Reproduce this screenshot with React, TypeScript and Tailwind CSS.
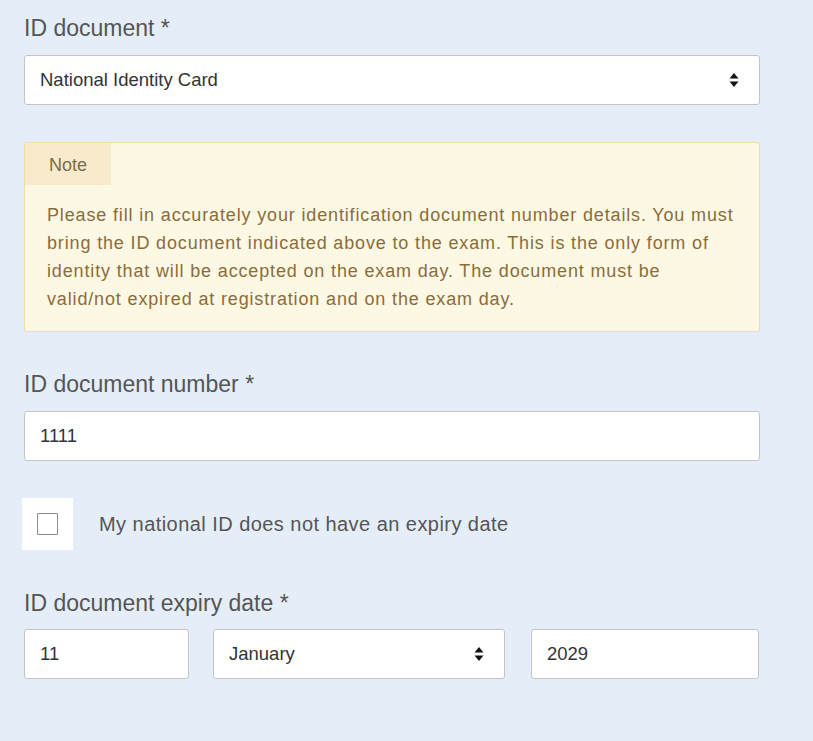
function SelectArrows() {
  return (
    <svg width="10" height="16" viewBox="0 0 10 16" className="shrink-0">
      <path d="M5 1 L9.5 6.5 H0.5 Z" fill="#111" />
      <path d="M5 15 L9.5 9.5 H0.5 Z" fill="#111" />
    </svg>
  );
}

function Label({ children, tight }: { children: React.ReactNode; tight?: boolean }) {
  return (
    <label className={"block text-[23px] leading-none text-[#555] " + (tight ? "mb-[14px]" : "mb-[15px]")}>
      {children}
    </label>
  );
}

function Field({ value, select, className }: { value: string; select?: boolean; className?: string }) {
  return (
    <div
      className={
        "h-[50px] bg-white border border-[#c4c4c4] rounded-[3px] flex items-center justify-between pl-[15px] pr-[20px] text-[18.5px] text-[#333] " +
        (className ?? "")
      }
    >
      <span>{value}</span>
      {select && <SelectArrows />}
    </div>
  );
}

export default function App() {
  return (
    <div className="min-h-[741px] w-[813px] bg-[#e5eef8] font-['Liberation_Sans',Arial,sans-serif]">
      <div className="w-[736px] ml-[24px] pt-[17px]">
        <Label>ID document *</Label>
        <Field value="National Identity Card" select />

        <div className="mt-[37px] bg-[#fdf8e3] border border-[#f0dfa4] rounded-[2px] pb-[18px]">
          <div className="inline-flex items-center h-[42px] pt-[3px] bg-[#f8ebcc] px-[24px] text-[18px] text-[#7a6a4e]">
            Note
          </div>
          <p className="px-[22px] pt-[16px] text-[18px] tracking-[0.85px] leading-[28px] text-[#8a6d3b]">
            Please fill in accurately your identification document number details. You must
            bring the ID document indicated above to the exam. This is the only form of
            identity that will be accepted on the exam day. The document must be
            valid/not expired at registration and on the exam day.
          </p>
        </div>

        <div className="mt-[41px]">
          <Label>ID document number *</Label>
          <Field value="1111" />
        </div>

        <div className="mt-[37px] flex items-center gap-[26px]">
          <div className="w-[51px] h-[52px] bg-white -ml-[2px] flex items-center justify-center">
            <div className="w-[21px] h-[22px] border border-[#8c8c8c] rounded-[1px] bg-white" />
          </div>
          <span className="text-[20px] tracking-[0.45px] text-[#555]">My national ID does not have an expiry date</span>
        </div>

        <div className="mt-[42px]">
          <Label tight>ID document expiry date *</Label>
          <div className="flex gap-[24px]">
            <Field value="11" className="w-[165px]" />
            <Field value="January" select className="w-[292px]" />
            <Field value="2029" className="w-[228px] ml-[2px]" />
          </div>
        </div>
      </div>
    </div>
  );
}
